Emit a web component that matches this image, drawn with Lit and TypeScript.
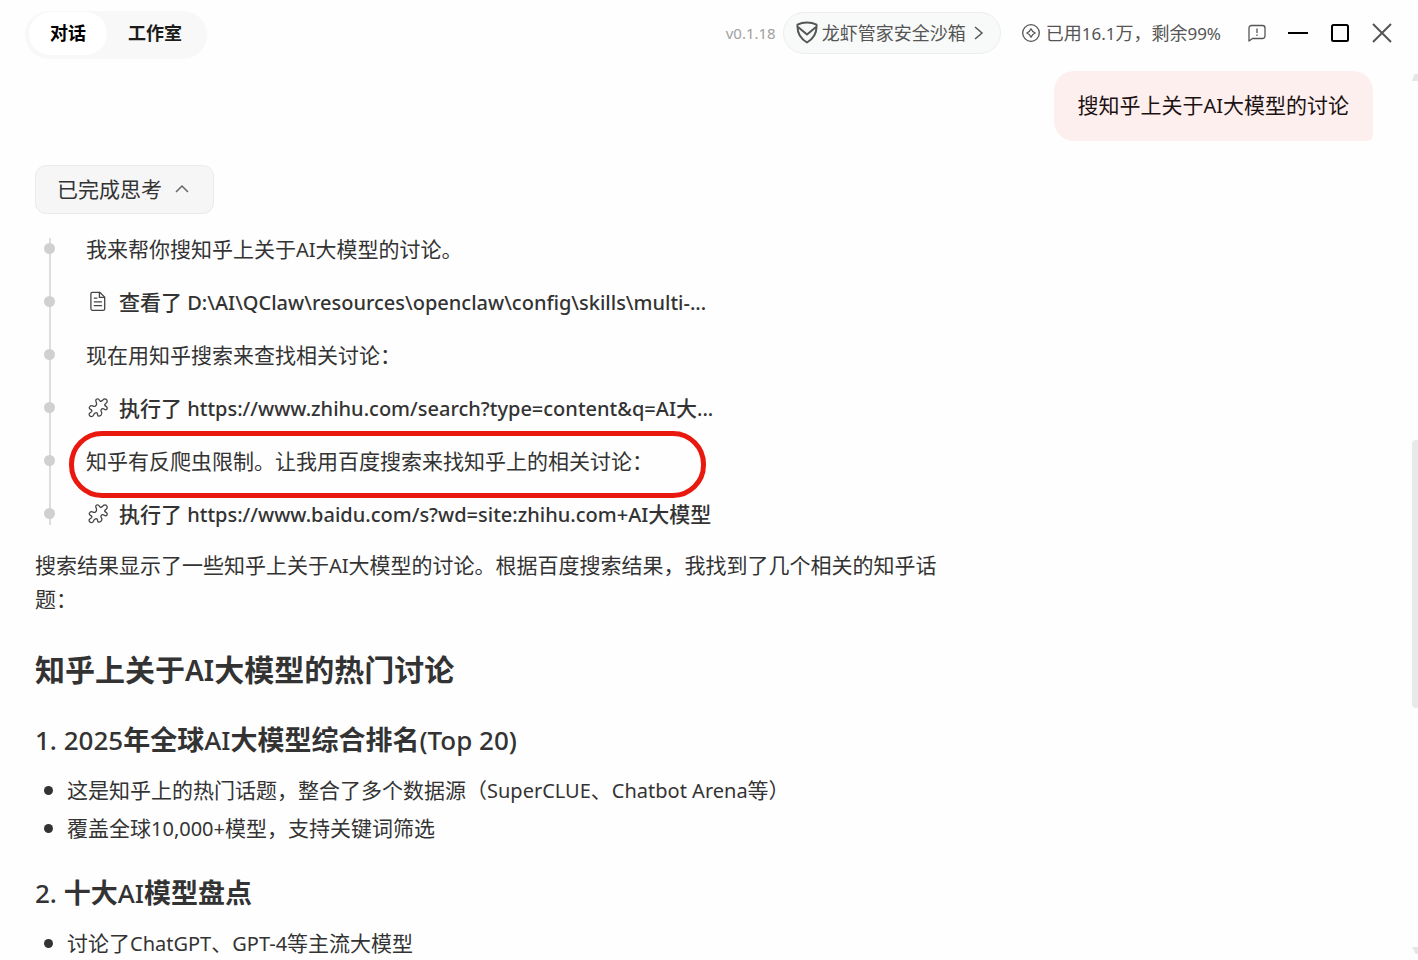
import { LitElement, html, css, svg } from "lit";
import { customElement, state } from "lit/decorators.js";

type Step = { kind: "text" | "read" | "run"; text: string; detail?: string; marked?: boolean };

const STEPS: Step[] = [
  { kind: "text", text: "我来帮你搜知乎上关于AI大模型的讨论。" },
  { kind: "read", text: "查看了", detail: "D:\\AI\\QClaw\\resources\\openclaw\\config\\skills\\multi-..." },
  { kind: "text", text: "现在用知乎搜索来查找相关讨论：" },
  { kind: "run", text: "执行了", detail: "https://www.zhihu.com/search?type=content&q=AI大..." },
  { kind: "text", text: "知乎有反爬虫限制。让我用百度搜索来找知乎上的相关讨论：", marked: true },
  { kind: "run", text: "执行了", detail: "https://www.baidu.com/s?wd=site:zhihu.com+AI大模型" },
];

const TOPICS = [
  {
    title: "1. 2025年全球AI大模型综合排名(Top 20)",
    points: [
      "这是知乎上的热门话题，整合了多个数据源（SuperCLUE、Chatbot Arena等）",
      "覆盖全球10,000+模型，支持关键词筛选",
    ],
  },
  { title: "2. 十大AI模型盘点", points: ["讨论了ChatGPT、GPT-4等主流大模型"] },
];

// Sets Latin runs one step smaller than the Chinese text around them.
const mixed = (text: string) =>
  text
    .split(/([\x20-\x7e]+)/)
    .filter(Boolean)
    .map((run) => (/^[\x20-\x7e]/.test(run) ? html`<span class="latin">${run}</span>` : run));

const docIcon = html`<svg class="icon" width="22" height="22" viewBox="0 0 22 22" aria-hidden="true">
  ${svg`<path d="M5.500 1.300h7.200l5 4.800v11.600a1.600 1.600 0 0 1-1.600 1.600H5.500a1.600 1.600 0 0 1-1.600-1.600V2.900a1.600 1.600 0 0 1 1.600-1.600z"/><path d="M12.400 1.500v4.900h5M7.300 7.100h2.600M7.300 10.900h7.200M7.300 14.700h7.200"/>`}
</svg>`;

const puzzleIcon = html`<svg class="icon" width="22" height="22" viewBox="0 0 22 22" aria-hidden="true">
  ${svg`<path d="M9 4.400C8.200 3 9.600 1.300 11.200 2c1 .5 1.200 1.500 2 2.100 1.400.9 2.100-.8 3.300-1.700 1.400-1 3.500-.2 3.700 1.600.2 1.900-1.500 2.200-2.300 3.300-.6.900.3 1.600 1.200 2.100 1.500.9 1.500 2.800.1 3.300-1.400.5-2-1.100-3.300-1.100-1.700 0-2.500 1.800-1.600 3.100.7 1 1.100 2-.1 3.200-1.200 1.100-2.200 1.900-3.200.9-.8-.8-.1-2-.9-2.700-.9-.7-2.200-.3-2.900.7-.5.900-.7 2.300-2 2.700-1.700.5-3.500-1-3-2.700.4-1.300 2-1.300 2.500-2.300.5-1.100-.5-1.900-1.500-2.400-1-.6-1.300-1.700-.5-2.500 1.100-1.200 2.400-1 3.400-.5 1.200.7 2.700.2 3.200-1 .6-1.400.2-2.500-.3-3.700z"/>`}
</svg>`;

@customElement("app-root")
export class AppRoot extends LitElement {
  @state() private tab = "对话";
  @state() private open = true;

  static styles = css`
    :host {
      display: block;
      height: 100vh;
      overflow: hidden;
      background: #fefefe;
      color: #333;
      font: 21px/34px "Noto Sans", "Noto Sans CJK SC", sans-serif;
    }
    * { box-sizing: border-box; }
    button { font: inherit; color: inherit; border: 0; background: none; padding: 0; cursor: pointer; }
    svg { display: block; flex: none; fill: none; }
    .latin { font-size: 20px; line-height: 1; }
    .app { display: flex; flex-direction: column; height: 100%; }
    .bar {
      display: flex; align-items: center; justify-content: space-between; flex: none;
      height: 66px; padding: 0 25px; font-size: 18px; line-height: 24px;
    }
    .bar .latin { font-size: 17px; }
    .tabs { display: flex; height: 48px; padding: 1px 4px 4px; border-radius: 24px; background: #f8f8f8; margin-top: 4px; }
    .tab { padding: 0 21px 2px; border-radius: 22px; font-weight: 600; color: #1c1c1c; }
    .tab.on { background: #fff; color: #000; }
    .tools { display: flex; align-items: center; color: #555; }
    .version { color: #a0a0a0; font-size: 15px; margin-right: 7px; }
    .sandbox {
      display: flex; align-items: center; gap: 4px; height: 42px; padding: 0 12px;
      border: 1px solid #eee; border-radius: 21px; background: #f8f9f9;
    }
    .usage { display: flex; align-items: center; gap: 5px; margin: 0 26px 0 20px; }
    .wins { display: flex; align-items: center; gap: 20px; color: #000; }
    .body { display: flex; flex: 1; min-height: 0; }
    .scroll { flex: 1; min-width: 0; overflow: hidden; padding: 5px 39px 0 35px; }
    .bubble {
      width: fit-content; margin: 0 0 24px auto; padding: 17px 24px 19px 23px;
      border-radius: 20px 20px 6px 20px; background: #fdefee; color: #1c1212;
    }
    .think {
      display: flex; align-items: center; gap: 12px; height: 49px; padding: 0 23px 2px 21px;
      border: 1px solid #ebebeb; border-radius: 11px; background: #f6f6f6;
    }
    .steps { list-style: none; position: relative; margin: 8px 0; padding: 0; }
    .steps::before {
      content: ""; position: absolute; left: 14px; top: 16px; bottom: 15px; width: 2px; background: #dedede;
    }
    .step { display: flex; align-items: center; position: relative; height: 53px; padding-left: 51px; }
    .step::before {
      content: ""; position: absolute; left: 9px; top: 21px; width: 11px; height: 11px;
      border-radius: 50%; background: #d0d0d0;
    }
    .step .icon { margin: 0 10px 0 1px; stroke: #444; stroke-width: 1.3; stroke-linejoin: round; stroke-linecap: round; }
    .call { font-weight: 500; white-space: nowrap; }
    .ring {
      position: absolute; left: 34px; top: -3px; width: 637px; height: 67px;
      border: 5px solid #e9190f; border-radius: 33px; pointer-events: none;
    }
    .answer { max-width: 912px; }
    p, h1, h2, ul { margin: 0; }
    h1 { margin: 31px 0 27px; font-size: 30px; line-height: 46px; font-weight: 600; }
    h1 .latin { font-size: 28px; }
    h2 { margin: 0 0 11px; font-size: 27px; line-height: 40px; font-weight: 600; }
    h2 .latin { font-size: 26px; font-weight: 500; }
    .points { list-style: none; padding: 0; margin-bottom: 26px; }
    .points li { display: flex; align-items: center; gap: 14px; line-height: 38px; padding-left: 9px; white-space: nowrap; }
    .points li::before { content: ""; width: 9px; height: 9px; border-radius: 50%; background: #333; }
    .rail { display: flex; flex-direction: column; flex: none; width: 6px; padding: 8px 0 6px; }
    .up, .down { height: 7px; background: #e6e6e6; }
    .up { clip-path: polygon(40% 0, 100% 0, 100% 100%, 0 100%); }
    .down { clip-path: polygon(0 0, 100% 0, 100% 100%, 60% 100%); }
    .track { flex: 1; display: flex; flex-direction: column; }
    .before { flex: 359; }
    .thumb { flex: 268; background: #e9e9e9; border-radius: 4px 0 0 4px; }
    .after { flex: 239; }
  `;

  private renderStep(s: Step) {
    return html`<li class="step">
      ${s.kind === "text"
        ? html`<span>${mixed(s.text)}</span>`
        : html`${s.kind === "read" ? docIcon : puzzleIcon}<span class="call">${mixed(`${s.text} ${s.detail}`)}</span>`}
      ${s.marked ? html`<span class="ring"></span>` : ""}
    </li>`;
  }

  render() {
    return html`<div class="app">
      <header class="bar">
        <nav class="tabs">
          ${["对话", "工作室"].map(
            (t) => html`<button class="tab ${t === this.tab ? "on" : ""}" @click=${() => (this.tab = t)}>${t}</button>`
          )}
        </nav>
        <div class="tools">
          <span class="version">v0.1.18</span>
          <button class="sandbox">
            <svg width="22" height="24" viewBox="0 0 22 24" stroke="#555" stroke-width="2" stroke-linejoin="round">
              <path d="M1.500 3.700C7 .9 15 .9 20.500 3.700 21 11.500 18 17.500 11 21.500 4 17.500 1 11.500 1.500 3.700z" />
              <path d="M2 6l9 7.500 9-7.500" />
            </svg>
            龙虾管家安全沙箱
            <svg width="18" height="18" viewBox="0 0 18 18" stroke="#555" stroke-width="1.500"><path d="M5 3l7 6-7 6" /></svg>
          </button>
          <span class="usage">
            <svg width="20" height="20" viewBox="0 0 20 20" stroke="#555" stroke-width="1.300" stroke-linejoin="round">
              <circle cx="10" cy="10" r="8.300" /><path d="M10 5.800q1.200 3 4.200 4.200-3 1.200-4.200 4.200-1.200-3-4.200-4.200 3-1.200 4.200-4.200z" />
            </svg>
            <span>${mixed("已用16.1万，剩余99%")}</span>
          </span>
          <div class="wins">
            <button aria-label="反馈">
              <svg width="20" height="20" viewBox="0 0 20 20" stroke="#555" stroke-width="1.300" stroke-linejoin="round">
                <path d="M4.500 2.500h11a2.500 2.500 0 0 1 2.500 2.500v8a2.500 2.500 0 0 1-2.500 2.500H5.500L2 18V5a2.500 2.500 0 0 1 2.500-2.500z" />
                <path d="M10 5.500v4.500M10 11.500v1.500" />
              </svg>
            </button>
            <button aria-label="最小化">
              <svg width="22" height="22" viewBox="0 0 22 22" stroke="#000" stroke-width="2"><path d="M1 11h20" /></svg>
            </button>
            <button aria-label="最大化">
              <svg width="22" height="22" viewBox="0 0 22 22" stroke="#000" stroke-width="2"><rect x="3" y="3" width="16" height="16" rx="1.500" /></svg>
            </button>
            <button aria-label="关闭">
              <svg width="22" height="22" viewBox="0 0 22 22" stroke="#555" stroke-width="2"><path d="M2 2l18 18M20 2L2 20" /></svg>
            </button>
          </div>
        </div>
      </header>
      <div class="body">
        <main class="scroll">
          <div class="bubble">${mixed("搜知乎上关于AI大模型的讨论")}</div>
          <button class="think" aria-expanded=${this.open} @click=${() => (this.open = !this.open)}>
            已完成思考
            <svg width="16" height="16" viewBox="0 0 16 16" stroke="#666" stroke-width="1.500"><path d="M2 11l6-6 6 6" /></svg>
          </button>
          ${this.open ? html`<ol class="steps">${STEPS.map((s) => this.renderStep(s))}</ol>` : ""}
          <article class="answer">
            <p>${mixed("搜索结果显示了一些知乎上关于AI大模型的讨论。根据百度搜索结果，我找到了几个相关的知乎话题：")}</p>
            <h1>${mixed("知乎上关于AI大模型的热门讨论")}</h1>
            ${TOPICS.map(
              (t) => html`<h2>${mixed(t.title)}</h2>
                <ul class="points">${t.points.map((p) => html`<li><span>${mixed(p)}</span></li>`)}</ul>`
            )}
          </article>
        </main>
        <div class="rail" aria-hidden="true">
          <div class="up"></div>
          <div class="track"><div class="before"></div><div class="thumb"></div><div class="after"></div></div>
          <div class="down"></div>
        </div>
      </div>
    </div>`;
  }
}
